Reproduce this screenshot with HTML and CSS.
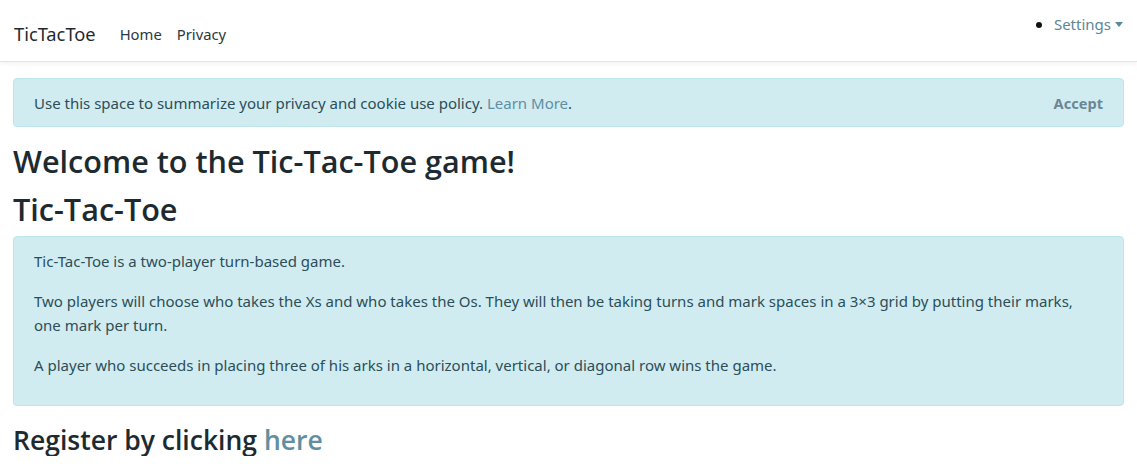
FILE: index.html
```html
<!DOCTYPE html>
<html>
<head>
<meta charset="utf-8">
<link rel="stylesheet" href="styles.css">
</head>
<body>
<header class="navbar">
  <a class="brand" href="#">TicTacToe</a>
  <nav class="nav-links">
    <a href="#">Home</a>
    <a href="#">Privacy</a>
  </nav>
  <ul class="settings">
    <li><a href="#">Settings<span class="caret"></span></a></li>
  </ul>
</header>
<main class="container">
  <div class="alert cookie">
    <span>Use this space to summarize your privacy and cookie use policy. <a class="link" href="#">Learn More</a>.</span>
    <button class="accept">Accept</button>
  </div>
  <h1 class="title">Welcome to the Tic-Tac-Toe game!</h1>
  <h2 class="title">Tic-Tac-Toe</h2>
  <div class="alert info">
    <p>Tic-Tac-Toe is a two-player turn-based game.</p>
    <p>Two players will choose who takes the Xs and who takes the Os. They will then be taking turns and mark spaces in a 3×3 grid by putting their marks, one mark per turn.</p>
    <p>A player who succeeds in placing three of his arks in a horizontal, vertical, or diagonal row wins the game.</p>
  </div>
  <h3 class="register">Register by clicking <a class="link" href="#">here</a></h3>
</main>
</body>
</html>
```
FILE: styles.css
```css
html, body {
  margin: 0;
  padding: 0;
  background: #fff;
  font-family: "Noto Sans", "Open Sans", sans-serif;
  color: #212529;
}
a { text-decoration: none; }

.navbar {
  display: flex;
  align-items: flex-start;
  height: 61px;
  border-bottom: 1px solid #dfe6e8;
  box-shadow: 0 2px 4px rgba(0,0,0,0.05);
  padding: 0 14px;
  box-sizing: content-box;
}
.brand {
  font-size: 18.3px;
  color: #1f2a30;
  margin-top: 21px;
  line-height: 26px;
  margin-right: 24px;
}
.nav-links {
  display: flex;
  gap: 15px;
  margin-top: 22px;
  line-height: 24px;
}
.nav-links a {
  font-size: 14.8px;
  color: #2a3940;
}
.settings {
  margin: 12px 0 0 auto;
  padding: 0;
  list-style: disc;
  line-height: 24px;
}
.settings li::marker { color: #111; }
.settings a {
  font-size: 15px;
  color: #5a8799;
}
.caret {
  display: inline-block;
  width: 0;
  height: 0;
  margin-left: 4px;
  vertical-align: 3px;
  border-top: 5px solid #5a8799;
  border-left: 4px solid transparent;
  border-right: 4px solid transparent;
}

.container {
  padding: 16px 13px 0 13px;
}
.alert {
  background: #d1ecf1;
  border: 1px solid #bee5eb;
  border-radius: 4px;
  color: #2b4e58;
  font-size: 15px;
}
.cookie {
  display: flex;
  justify-content: space-between;
  align-items: center;
  height: 49px;
  box-sizing: border-box;
  padding: 0 20px;
}
.link { color: #5f8fa0; }
.accept {
  background: none;
  border: 0;
  font-family: inherit;
  font-weight: bold;
  font-size: 14.6px;
  color: #6b8793;
  padding: 0;
}
.title {
  margin: 0;
  font-family: "Open Sans", "Noto Sans", sans-serif;
  font-size: 30.6px;
  font-weight: 600;
  color: #1d2a30;
  line-height: 38px;
}
h1.title { margin-top: 15px; margin-bottom: 10px; }
h2.title { margin-bottom: 8px; }
.info {
  padding: 12px 20px 12px 20px;
}
.info p {
  margin: 0 0 16px 0;
  line-height: 24px;
}
.register {
  margin: 18px 0 0 0;
  font-family: "Open Sans", "Noto Sans", sans-serif;
  font-size: 26.5px;
  font-weight: 600;
  color: #1d2a30;
  line-height: 32px;
}
```
